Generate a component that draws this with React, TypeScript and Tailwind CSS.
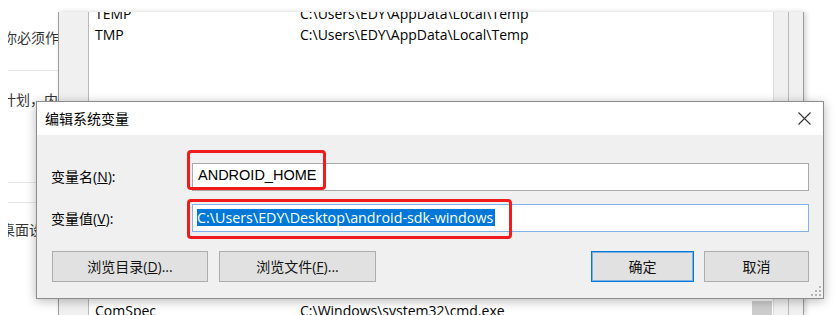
import React from "react";

const FONT = '"Open Sans", "Noto Sans CJK SC", sans-serif';
const FONT2 = '"Liberation Sans", "Noto Sans CJK SC", sans-serif';

function Btn({ children, w, primary }: { children: React.ReactNode; w: string; primary?: boolean }) {
  return (
    <div
      className={`${w} h-[31px] flex items-center justify-center bg-[#e1e1e1] border text-[14px] text-[#111] ${
        primary ? "border-[#0078d7] shadow-[inset_0_0_0_1px_rgba(0,120,215,0.45)]" : "border-[#adadad]"
      }`}
    >
      {children}
    </div>
  );
}

export default function App() {
  return (
    <div
      className="relative h-[315px] w-[837px] overflow-hidden bg-white text-[14px] text-black"
      style={{ fontFamily: FONT }}
    >
      <div className="h-[12px]" />
      <div className="flex h-[303px]">
        {/* left web page */}
        <div className="w-[58px] pl-[8px] flex flex-col">
          <div className="overflow-hidden flex flex-col">
            <div className="mt-[16px] h-[20px] leading-[20px] whitespace-nowrap -ml-[5px] text-[#333]">你必须作</div>
            <div className="mt-[22px] h-px bg-[#e6e6e6]" />
            <div className="mt-[19px] h-[20px] leading-[20px] whitespace-nowrap -ml-[6px] text-[#333]">计划，内容</div>
            <div className="mt-[72px] h-px bg-[#e6e6e6]" />
            <div className="mt-[19px] h-px bg-[#e6e6e6]" />
            <div className="mt-[17px] h-[20px] leading-[20px] whitespace-nowrap -ml-[7px] text-[#333]">桌面设置</div>
          </div>
        </div>

        {/* environment variables window */}
        <div className="w-[746px] flex border-l border-r border-[#9c9c9c] bg-[#f0f0f0] shadow-[2px_0_5px_rgba(0,0,0,0.18)]">
          <div className="w-[29px]" />
          <div className="w-[701px] flex border-l border-r border-[#b9b9b9] bg-white">
            <div className="w-[684px] flex flex-col overflow-hidden">
              <div className="-mt-[9px] h-[21px] leading-[21px] flex whitespace-nowrap">
                <span className="pl-[6px] w-[211px]">TEMP</span>
                <span>C:\Users\EDY\AppData\Local\Temp</span>
              </div>
              <div className="h-[21px] leading-[21px] flex whitespace-nowrap">
                <span className="pl-[6px] w-[211px]">TMP</span>
                <span>C:\Users\EDY\AppData\Local\Temp</span>
              </div>
              <div className="flex-1" />
              <div className="-mb-[6px] h-[21px] leading-[21px] flex whitespace-nowrap">
                <span className="pl-[6px] w-[211px]">ComSpec</span>
                <span>C:\Windows\system32\cmd.exe</span>
                <span className="ml-auto mr-px w-[20px] mt-[1px] bg-[#cdcdcd]" />
              </div>
            </div>
            <div className="w-[15px] border-l border-[#dcdcdc] bg-[#f0f0f0]" />
          </div>
          <div className="w-[14px]" />
        </div>
        <div className="flex-1" />
      </div>

      {/* dialog */}
      <div className="absolute left-[36px] top-[101px] w-[788px] h-[198px] border border-[#8c8c8c] bg-[#f0f0f0] flex flex-col shadow-[0_2px_10px_rgba(0,0,0,0.28)]">
        <div className="h-[33px] bg-white flex items-center pl-[8px] pr-[12px]">
          <span className="text-[14px] text-black">编辑系统变量</span>
          <div className="ml-auto">
            <svg width="13" height="13" viewBox="0 0 13 13">
              <path d="M0.5 0.5 L12.5 12.5 M12.5 0.5 L0.5 12.5" stroke="#333" strokeWidth="1.1" />
            </svg>
          </div>
        </div>
        <div className="relative flex-1 flex flex-col pt-[28px]">
          <div className="flex items-center pl-[14px] pr-[14px]">
            <span className="w-[141px] pb-[2px]">
              变量名(<u>N</u>):
            </span>
            <div
              className="flex-1 h-[28px] bg-white border border-[#a9a9a9] flex items-center pl-[5px] pb-[3px] text-[14.5px]"
              style={{ fontFamily: FONT2 }}
            >
              ANDROID_HOME
            </div>
          </div>
          <div className="flex items-center pl-[14px] pr-[14px] mt-[13px]">
            <span className="w-[141px]">
              变量值(<u>V</u>):
            </span>
            <div className="flex-1 h-[28px] bg-white border border-[#7eb4ea] flex items-center pl-[4px] pb-[2px]">
              <span className="bg-[#0078d7] text-white text-[14.3px] leading-[17px] pr-[2px]">
                C:\Users\EDY\Desktop\android-sdk-windows
              </span>
            </div>
          </div>
          <div className="flex mt-[19px] pl-[15px] pr-[14px]">
            <div className="flex gap-[11px]">
              <Btn w="w-[156px]">
                浏览目录(<u>D</u>)...
              </Btn>
              <Btn w="w-[157px]">
                浏览文件(<u>F</u>)...
              </Btn>
            </div>
            <div className="ml-auto flex gap-[10px]">
              <Btn w="w-[103px]" primary>
                确定
              </Btn>
              <Btn w="w-[105px]">取消</Btn>
            </div>
          </div>
          <svg className="absolute right-[2px] bottom-[2px]" width="10" height="10" viewBox="0 0 10 10">
            <g fill="#b5b5b5">
              <rect x="8" y="0" width="2" height="2" />
              <rect x="4" y="4" width="2" height="2" />
              <rect x="8" y="4" width="2" height="2" />
              <rect x="0" y="8" width="2" height="2" />
              <rect x="4" y="8" width="2" height="2" />
              <rect x="8" y="8" width="2" height="2" />
            </g>
          </svg>
        </div>
      </div>

      {/* red annotation boxes */}
      <div className="absolute left-[187px] top-[150px] w-[139px] h-[40px] border-[3px] border-[#f01c1c] rounded-[4px]" />
      <div className="absolute left-[187px] top-[199px] w-[325px] h-[40px] border-[3px] border-[#f01c1c] rounded-[4px]" />
    </div>
  );
}
